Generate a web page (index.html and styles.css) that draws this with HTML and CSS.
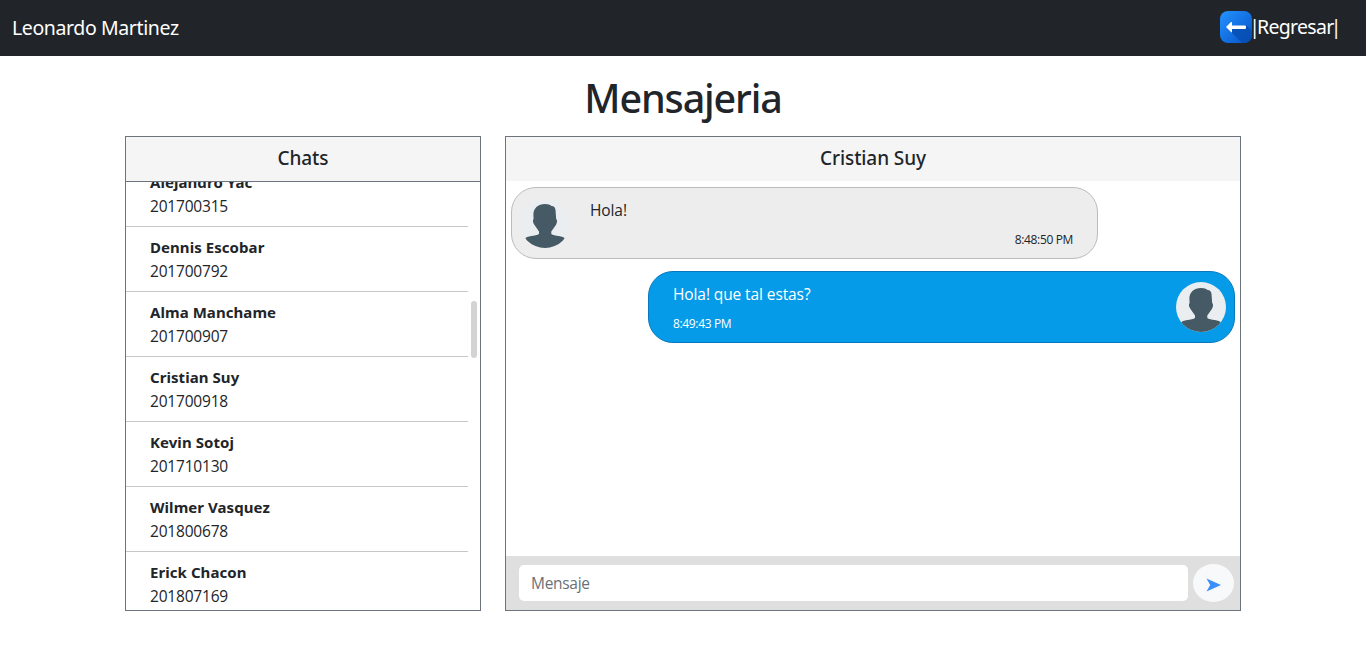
FILE: index.html
```html
<!DOCTYPE html>
<html lang="es">
<head>
<meta charset="utf-8">
<title>Mensajeria</title>
<link rel="stylesheet" href="styles.css">
</head>
<body>
<svg class="defs" width="0" height="0" aria-hidden="true">
  <defs>
    <clipPath id="round"><circle cx="25" cy="25" r="25"/></clipPath>
    <symbol id="avatar" viewBox="0 0 50 50">
      <g clip-path="url(#round)">
        <rect width="50" height="50" fill="#eaeef1"/>
        <path fill="#455a64" d="M13.4 17C13.1 10.500 18 6 25 6C28 6 30.500 6.900 31.500 8C34 8.200 35.200 9.300 35.500 12L36.200 21C37.500 22 37.200 25 35.900 27L31.300 33.500V36C34 38.600 44 37.300 45 41V50H5V41C6 37.300 16 38.600 19 36V33.500L14.500 27C12.800 25 12.500 22 13.600 21Z"/>
      </g>
    </symbol>
  </defs>
</svg>
<nav class="navbar">
  <span class="brand">Leonardo Martinez</span>
  <a class="back">
    <svg class="back-icon" width="32" height="32" viewBox="0 0 32 32">
      <defs>
        <linearGradient id="blue" x1="0" y1="0" x2="1" y2="1"><stop offset="0" stop-color="#2492ff"/><stop offset="1" stop-color="#0453c8"/></linearGradient>
        <linearGradient id="shade" x1="0" y1="0" x2="1" y2="1"><stop offset="0" stop-color="#0346a4"/><stop offset="1" stop-color="#0346a4" stop-opacity=".7"/></linearGradient>
      </defs>
      <rect width="32" height="32" rx="8" fill="url(#blue)"/>
      <path d="M26 14L32 20V24Q32 32 24 32H22L7 17L12 18Z" fill="url(#shade)" opacity=".75"/>
      <path d="M6 16L11 11Q12 10.500 12 12V14.500H25Q26 14.500 26 15.200V17Q26 18 25 18H12V20.500Q12 22 11 21Z" fill="#fff"/>
    </svg><span class="back-text"><span class="bar">|</span>Regresar<span class="bar">|</span></span>
  </a>
</nav>
<h1 class="title"><span>Mensajeria</span></h1>
<main class="panels">
  <section class="panel chats">
    <h2 class="panel-head chats-head">Chats</h2>
    <div class="list-view">
      <ul class="list">
        <li><b>Alejandro Yac</b><span>201700315</span></li>
        <li><b>Dennis Escobar</b><span>201700792</span></li>
        <li><b>Alma Manchame</b><span>201700907</span></li>
        <li><b>Cristian Suy</b><span>201700918</span></li>
        <li><b>Kevin Sotoj</b><span>201710130</span></li>
        <li><b>Wilmer Vasquez</b><span>201800678</span></li>
        <li><b>Erick Chacon</b><span>201807169</span></li>
      </ul>
      <i class="thumb"></i>
    </div>
  </section>
  <section class="panel talk">
    <h2 class="panel-head">Cristian Suy</h2>
    <div class="messages">
      <article class="msg received">
        <svg class="face" width="50" height="50"><use href="#avatar"/></svg>
        <div class="msg-body"><p>Hola!</p><time>8:48:50 PM</time></div>
      </article>
      <article class="msg sent">
        <div class="msg-body"><p>Hola! que tal estas?</p><time>8:49:43 PM</time></div>
        <svg class="face" width="50" height="50"><use href="#avatar"/></svg>
      </article>
    </div>
    <form class="composer">
      <input class="field" type="text" placeholder="Mensaje">
      <button class="send" type="button" aria-label="Enviar">
        <svg width="16" height="16" viewBox="0 0 16 16"><path d="M.5 1.500L15 8L.5 14.500L4.200 8Z" fill="#3b8efb"/></svg>
      </button>
    </form>
  </section>
</main>
</body>
</html>
```
FILE: styles.css
```css
* { box-sizing: border-box; }
body {
  margin: 0;
  height: 646px;
  overflow: hidden;
  background: #fff;
  color: #212529;
  font: 400 15.5px/24px "Open Sans", "Noto Sans", sans-serif;
}
.defs { position: absolute; }
.navbar {
  display: flex;
  align-items: center;
  justify-content: space-between;
  height: 56px;
  padding: 0 28px 0 12px;
  background: #212529;
  color: #fff;
  font: 400 19.5px/30px "Noto Sans", sans-serif;
}
.brand { letter-spacing: -.39px; }
.back { display: flex; align-items: center; width: 118px; height: 32px; margin-top: -2px; }
.back-icon { flex: none; }
.back-text { display: flex; letter-spacing: -.7px; }
.bar { width: 5px; display: flex; justify-content: center; letter-spacing: 0; }
.title {
  margin: 18px 0 14px;
  text-align: center;
  font: 500 39.500px/48px "Noto Sans", sans-serif;
  letter-spacing: -1.150px;
}
.panels { display: flex; gap: 24px; padding: 0 125px; }
.panel { display: flex; flex-direction: column; height: 475px; border: 1px solid #6c757d; }
.chats { width: 356px; }
.talk { width: 736px; }
.panel-head {
  flex: none;
  height: 44px;
  margin: 0;
  padding-top: 9px;
  background: #f5f5f5;
  text-align: center;
  font: 500 19px/24px "Noto Sans", sans-serif;
  letter-spacing: -.1px;
}
.chats-head { height: 45px; border-bottom: 1px solid #6c757d; }
.list-view { position: relative; flex: 1; overflow: hidden; }
.list { width: 342px; margin: -20px 0 0; padding: 0; list-style: none; }
.list li { display: flex; flex-direction: column; height: 65px; padding: 8px 24px; border-bottom: 1px solid #c4c8cb; }
.list b { font: 700 15px/24px "Noto Sans", sans-serif; letter-spacing: .06px; }
.list span { letter-spacing: -.2px; }
.thumb { position: absolute; top: 119px; right: 3px; width: 6px; height: 57px; border-radius: 3px; background: #d3d3d3; }
.messages { display: flex; flex: 1; flex-direction: column; gap: 12px; padding: 6px 5px; }
.msg { display: flex; width: 587px; height: 72px; border: 1px solid; border-radius: 25px; }
.received { padding: 10px 24px 0 8px; gap: 20px; border-color: #bbb; background: #ededed; }
.sent { align-self: flex-end; padding: 10px 8px 0 24px; border-color: #0879bd; background: #059be8; color: #fff; }
.msg-body { display: flex; flex: 1; flex-direction: column; }
.msg p { margin: 0 0 10px; letter-spacing: -.1px; }
.msg time { font-size: 12px; line-height: 16px; letter-spacing: -.35px; }
.received time { align-self: flex-end; }
.composer { display: flex; align-items: center; gap: 5px; height: 54px; padding: 0 6px 0 13px; background: #dfdfdf; }
.field { width: 669px; height: 36px; padding: 0 12px; border: 0; border-radius: 5px; background: #fff; font: inherit; letter-spacing: -.3px; }
.field::placeholder { color: #6a7178; opacity: 1; }
.send { display: flex; align-items: center; justify-content: center; width: 41px; height: 38px; padding: 4px 0 0; border: 0; border-radius: 50%; background: #f8f9fa; }
```
